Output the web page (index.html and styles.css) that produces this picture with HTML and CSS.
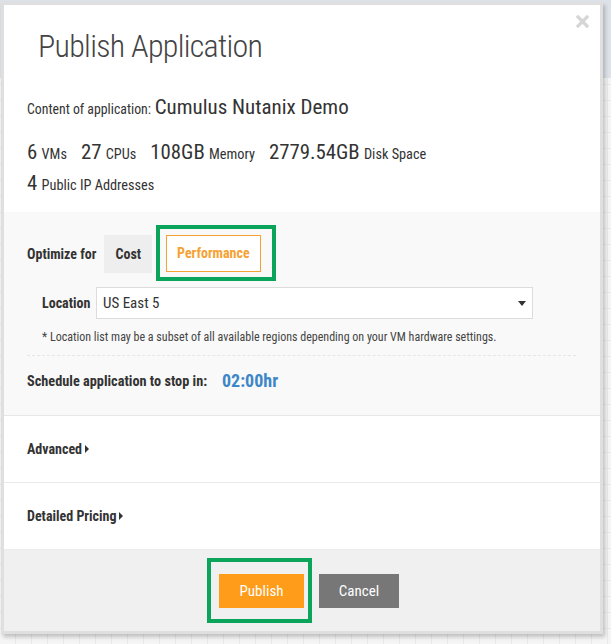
FILE: index.html
```html
<!DOCTYPE html>
<html>
<head>
<meta charset="utf-8">
<title>Publish Application</title>
<link rel="stylesheet" href="styles.css">
</head>
<body>
<div class="modal">
  <button class="close" aria-label="Close">
    <svg width="13" height="13" viewBox="0 0 13 13"><path d="M2 2L11 11M11 2L2 11" stroke="#d6d6d6" stroke-width="3.2" stroke-linecap="square"/></svg>
  </button>
  <h1 class="title">Publish Application</h1>
  <div class="summary">
    <p class="app"><span class="lbl">Content of application:</span> <span class="name">Cumulus Nutanix Demo</span></p>
    <p class="stats">
      <span class="stat"><span class="num">6</span> VMs</span>
      <span class="stat"><span class="num">27</span> CPUs</span>
      <span class="stat"><span class="num">108GB</span> Memory</span>
      <span class="stat"><span class="num">2779.54GB</span> Disk Space</span>
    </p>
    <p class="stats ip"><span class="stat"><span class="num">4</span> Public IP Addresses</span></p>
  </div>
  <div class="config">
    <div class="opt-row">
      <span class="opt-label">Optimize for</span>
      <span class="chip">Cost</span>
      <span class="hl hl-opt"><span class="chip active">Performance</span></span>
    </div>
    <div class="loc-row">
      <span class="loc-label">Location</span>
      <div class="select">US East 5<span class="caret"></span></div>
    </div>
    <p class="note">* Location list may be a subset of all available regions depending on your VM hardware settings.</p>
    <div class="sched">
      <span class="sched-label">Schedule application to stop in:</span>
      <span class="time">02:00hr</span>
    </div>
  </div>
  <div class="toggle">Advanced<span class="tri"></span></div>
  <div class="toggle">Detailed Pricing<span class="tri"></span></div>
  <div class="footer">
    <span class="hl hl-btn"><button class="btn publish">Publish</button></span>
    <button class="btn cancel">Cancel</button>
  </div>
</div>
</body>
</html>
```
FILE: styles.css
```css
html, body {
  margin: 0;
  padding: 0;
}
body {
  width: 611px;
  height: 644px;
  overflow: hidden;
  font-family: "Roboto Condensed", Roboto, sans-serif;
  color: #333;
  background:
    linear-gradient(#dce2e7 0, #dce2e7 78px, transparent 78px),
    repeating-linear-gradient(90deg, transparent 0 15px, #e9e9e9 15px 16px),
    repeating-linear-gradient(0deg, transparent 0 15px, #e9e9e9 15px 16px),
    #f5f5f5;
}
.modal {
  position: relative;
  box-sizing: border-box;
  width: 602px;
  margin: 2px 0 0 1px;
  background: #fff;
  border: 3px solid #dfdfdf;
  box-shadow: 2px 3px 4px rgba(0, 0, 0, 0.22);
}
.close {
  position: absolute;
  top: 10px;
  right: 11px;
  width: 13px;
  height: 13px;
  padding: 0;
  border: 0;
  background: none;
  display: block;
}
.close svg { display: block; }
.title {
  margin: 0;
  padding: 21px 0 0 34px;
  font-size: 32px;
  line-height: 40px;
  font-weight: 300;
  color: #444;
  letter-spacing: -0.7px;
}
.summary {
  padding: 29px 0 15px 23px;
}
.summary p { margin: 0; }
.app {
  line-height: 24px;
  white-space: nowrap;
}
.app .lbl { font-size: 13.8px; }
.app .name { font-size: 21px; }
.stats {
  display: flex;
  gap: 14px;
  line-height: 24px;
  margin-top: 19px !important;
  font-size: 14.3px;
}
.stats.ip { margin-top: 5px !important; }
.num { font-size: 20.8px; margin-right: 1px; }
.config {
  background: #f9f9f9;
  border-bottom: 1px solid #e8e8e8;
  padding: 13px 24px 22px 23px;
}
.opt-row {
  display: flex;
  align-items: flex-start;
  height: 56px;
}
.opt-label {
  font-weight: 700;
  font-size: 14px;
  margin-top: 10px;
  line-height: 38px;
  margin-right: 8px;
}
.chip {
  display: inline-block;
  box-sizing: border-box;
  height: 38px;
  line-height: 38px;
  padding: 0 11px;
  margin-top: 10px;
  background: #eeeeee;
  font-weight: 700;
  font-size: 14px;
  color: #333;
}
.hl {
  display: inline-block;
  border: 4px solid #0aa55a;
}
.hl-opt {
  margin-left: 4px;
  padding: 6px 11px 5px 6px;
}
.chip.active {
  margin-top: 0;
  height: 37px;
  line-height: 35px;
  padding: 0 10px;
  background: #fff;
  border: 1px solid #f6a133;
  color: #f6a133;
}
.loc-row {
  display: flex;
  align-items: center;
  margin-top: 6px;
  padding-left: 15px;
}
.loc-label {
  font-weight: 700;
  font-size: 14px;
  width: 54px;
}
.select {
  position: relative;
  box-sizing: border-box;
  width: 437px;
  height: 32px;
  line-height: 30px;
  padding-left: 6px;
  background: #fff;
  border: 1px solid #dcdcdc;
  font-size: 15px;
  color: #333;
}
.caret {
  position: absolute;
  right: 6px;
  top: 13px;
  border-left: 4px solid transparent;
  border-right: 4px solid transparent;
  border-top: 5px solid #333;
}
.note {
  margin: 10px 0 0;
  padding-left: 15px;
  font-size: 12px;
  line-height: 16px;
  color: #444;
  white-space: nowrap;
}
.sched {
  margin-top: 10px;
  border-top: 1px dashed #e6e6e6;
  padding-top: 13px;
  display: flex;
  align-items: center;
  line-height: 24px;
}
.sched-label {
  font-weight: 700;
  font-size: 14.3px;
  width: 195px;
}
.time {
  font-weight: 700;
  font-size: 18px;
  color: #3d86c8;
}
.toggle {
  height: 67px;
  box-sizing: border-box;
  display: flex;
  align-items: center;
  padding-left: 23px;
  font-weight: 700;
  font-size: 14px;
  border-bottom: 1px solid #ececec;
}
.toggle:last-of-type { border-bottom: 0; }
.tri {
  display: inline-block;
  margin-left: 3px;
  border-top: 4px solid transparent;
  border-bottom: 4px solid transparent;
  border-left: 4px solid #333;
}
.footer {
  background: #f0f0f0;
  height: 81px;
  box-sizing: border-box;
  padding-top: 8px;
  padding-left: 2px;
  display: flex;
  justify-content: center;
  align-items: flex-start;
  gap: 7px;
}
.hl-btn {
  padding: 12px 4px 11px 8px;
}
.btn {
  display: block;
  height: 34px;
  border: 0;
  padding: 0;
  font-family: "Roboto Condensed", Roboto, sans-serif;
  font-size: 15px;
  color: #fff;
}
.publish {
  width: 85px;
  background: #ff9c1a;
}
.cancel {
  width: 80px;
  margin-top: 16px;
  background: #777777;
}
```
